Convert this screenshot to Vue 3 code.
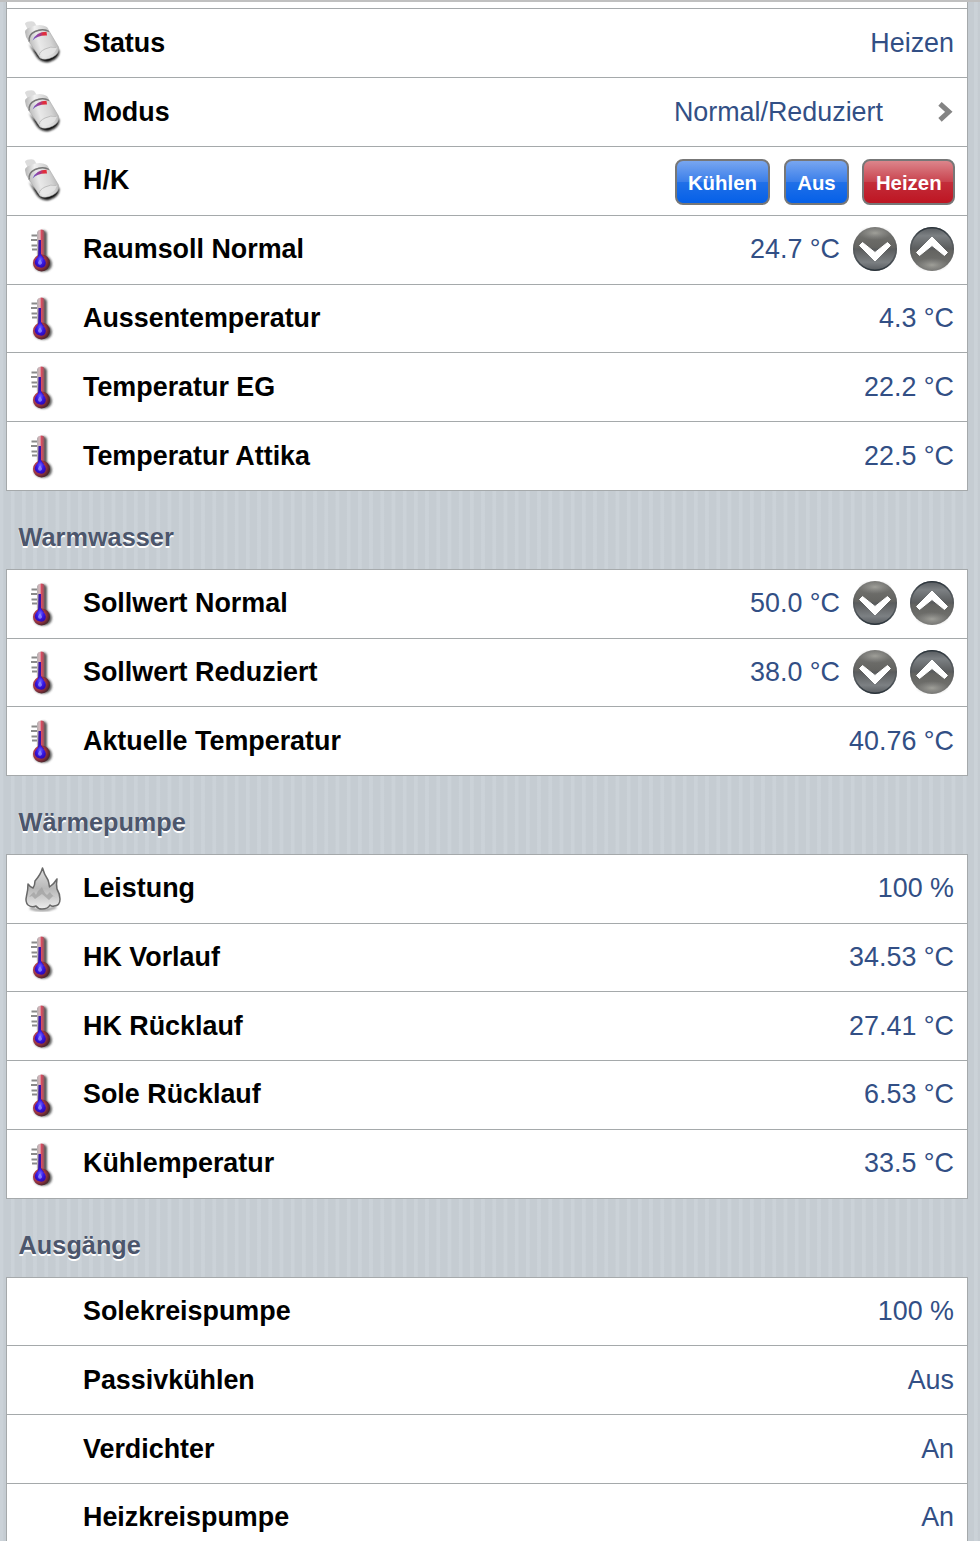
<script setup>
const groups = [
  {
    title: '',
    rows: [
      { icon: 'bottle', label: 'Status', value: 'Heizen' },
      { icon: 'bottle', label: 'Modus', value: 'Normal/Reduziert', link: true },
      { icon: 'bottle', label: 'H/K', buttons: [['Kühlen', 'blue'], ['Aus', 'blue'], ['Heizen', 'red']] },
      { icon: 'thermo', label: 'Raumsoll Normal', value: '24.7 °C', stepper: true },
      { icon: 'thermo', label: 'Aussentemperatur', value: '4.3 °C' },
      { icon: 'thermo', label: 'Temperatur EG', value: '22.2 °C' },
      { icon: 'thermo', label: 'Temperatur Attika', value: '22.5 °C' },
    ],
  },
  {
    title: 'Warmwasser',
    rows: [
      { icon: 'thermo', label: 'Sollwert Normal', value: '50.0 °C', stepper: true },
      { icon: 'thermo', label: 'Sollwert Reduziert', value: '38.0 °C', stepper: true },
      { icon: 'thermo', label: 'Aktuelle Temperatur', value: '40.76 °C' },
    ],
  },
  {
    title: 'Wärmepumpe',
    rows: [
      { icon: 'flame', label: 'Leistung', value: '100 %' },
      { icon: 'thermo', label: 'HK Vorlauf', value: '34.53 °C' },
      { icon: 'thermo', label: 'HK Rücklauf', value: '27.41 °C' },
      { icon: 'thermo', label: 'Sole Rücklauf', value: '6.53 °C' },
      { icon: 'thermo', label: 'Kühlemperatur', value: '33.5 °C' },
    ],
  },
  {
    title: 'Ausgänge',
    rows: [
      { label: 'Solekreispumpe', value: '100 %' },
      { label: 'Passivkühlen', value: 'Aus' },
      { label: 'Verdichter', value: 'An' },
      { label: 'Heizkreispumpe', value: 'An' },
    ],
  },
]
</script>

<template>
  <main class="screen">
    <svg class="defs" width="0" height="0" aria-hidden="true">
      <defs>
        <linearGradient id="bottleBody" x1="0" y1=".4" x2="1" y2=".1">
          <stop offset="0" stop-color="#bcbcbc" /><stop offset=".3" stop-color="#e9e9e9" />
          <stop offset=".65" stop-color="#d6d6d6" /><stop offset="1" stop-color="#a5a5a5" />
        </linearGradient>
        <linearGradient id="bottleCap" x1="0" y1="0" x2="1" y2="0">
          <stop offset="0" stop-color="#b5b5b5" /><stop offset=".4" stop-color="#f1f1f1" /><stop offset="1" stop-color="#c8c8c8" />
        </linearGradient>
        <linearGradient id="bottleMark" x1="0" y1="0" x2="1" y2="0">
          <stop offset="0" stop-color="#6a5fd0" /><stop offset=".5" stop-color="#a03a90" /><stop offset=".75" stop-color="#e02d3c" />
        </linearGradient>
        <linearGradient id="tube" x1="0" y1="0" x2="1" y2="0">
          <stop offset="0" stop-color="#b5b0b2" /><stop offset=".4" stop-color="#d9b4ba" />
          <stop offset=".6" stop-color="#d84c60" /><stop offset="1" stop-color="#8a5a62" />
        </linearGradient>
        <radialGradient id="bulb" cx=".35" cy=".4" r=".7">
          <stop offset="0" stop-color="#d8506a" /><stop offset=".6" stop-color="#96313f" /><stop offset="1" stop-color="#352226" />
        </radialGradient>
        <radialGradient id="drop" cx=".5" cy=".45" r=".6">
          <stop offset="0" stop-color="#6d68ff" /><stop offset=".5" stop-color="#3818e8" /><stop offset="1" stop-color="#2a08ae" />
        </radialGradient>
        <linearGradient id="flame" x1="0" y1="0" x2="0" y2="1">
          <stop offset="0" stop-color="#dedede" /><stop offset=".5" stop-color="#b8b8b8" />
          <stop offset=".72" stop-color="#cecece" /><stop offset="1" stop-color="#eee" />
        </linearGradient>
        <linearGradient id="discDown" x1="0" y1="0" x2="0" y2="1">
          <stop offset="0" stop-color="#777773" /><stop offset=".46" stop-color="#646461" />
          <stop offset=".5" stop-color="#5a5c5d" /><stop offset=".8" stop-color="#7c8083" /><stop offset="1" stop-color="#55595d" />
        </linearGradient>
        <radialGradient id="gloss"><stop offset="0" stop-color="#b4b4ac" stop-opacity=".7" /><stop offset="1" stop-color="#999" stop-opacity="0" /></radialGradient>
        <linearGradient id="rim" x1="0" y1="0" x2="0" y2="1">
          <stop offset="0" stop-color="#777" stop-opacity=".2" /><stop offset=".6" stop-color="#454b50" stop-opacity=".5" /><stop offset="1" stop-color="#2b343b" />
        </linearGradient>
        <filter id="soft" x="-30%" y="-30%" width="160%" height="160%"><feGaussianBlur stdDeviation="1.1" /></filter>
        <filter id="fine" x="-10%" y="-10%" width="120%" height="120%"><feGaussianBlur stdDeviation=".55" /></filter>
      </defs>
    </svg>

    <section v-for="(group, g) in groups" :key="g" class="group">
      <h2 v-if="group.title">{{ group.title }}</h2>
      <ul>
        <li v-for="row in group.rows" :key="row.label">
          <span class="icon">
            <svg v-if="row.icon === 'bottle'" width="48" height="48" viewBox="0 0 48 48">
              <path d="M12 24L20 37Q24 43 32 42Q42 39 42.500 31L38 26L18 30Z" fill="#111" filter="url(#soft)" />
              <g filter="url(#fine)">
                <path d="M8 4Q8 2 12 1.500Q17 .5 18 3L20 7L11 10Z" fill="#dcdcdc" />
                <path d="M8 12Q8 9 13 7.500Q21 4 26 5.500Q31 6.500 31.500 9.500L32 14L13 24L9 17Z" fill="url(#bottleCap)" />
                <path d="M12 21.500Q11 15 18 11.500Q26 8 32 11L41.500 27Q43 33 36 37Q28 41 23 38Z" fill="url(#bottleBody)" stroke="#aaa" stroke-width=".6" />
                <path d="M12.300 21.500Q11 15 18 11.500Q26 8 32 11.500" fill="none" stroke="#777" stroke-width="1.400" />
                <path d="M15.500 20.500Q19 12 29.500 11.800L30 15.500Q21 15 15.500 20.500Z" fill="url(#bottleMark)" />
                <path d="M23 36Q21 32 28 29Q36 25 40 28Q37 36 26 37Z" fill="#e8e8e8" opacity=".7" />
                <path d="M22.500 35Q22 32 28 29Q34 26 39 27.500" fill="none" stroke="#bdbdbd" />
              </g>
            </svg>
            <svg v-else-if="row.icon === 'thermo'" width="48" height="48" viewBox="0 0 48 48">
              <path d="M23 5Q28 1 30 6V29Q37 34 34 41Q29 47 20 43Q13 37 21 30Z" fill="#333" opacity=".8" filter="url(#soft)" />
              <g filter="url(#fine)">
                <path d="M14.500 8.500H20M14 13H20M14.500 18.500H20M15 22.500H20" stroke="#8a8a8a" stroke-width="1.800" />
                <path d="M20 29V5Q21 2.500 24 2.500Q27.500 2.500 27.500 5V29Z" fill="url(#tube)" />
                <circle cx="24.500" cy="36" r="8.500" fill="url(#bulb)" />
                <path d="M21.500 13H24V27Q25 29 27 31L21 31Z" fill="#3818a8" />
                <path d="M23 26Q25 30 28 33Q30 37 27 40Q24 41.500 20 39.500Q16 36 19 32Q22 29 23 26Z" fill="url(#drop)" />
                <path d="M21 35.500Q23 31 24 34Q26 36 24 37.500Q21 38.500 21 35.500Z" fill="#a5a4ff" opacity=".65" />
              </g>
            </svg>
            <svg v-else-if="row.icon === 'flame'" width="48" height="48" viewBox="0 0 48 48">
              <path d="M13 42Q26 47 39 41" stroke="#999" stroke-width="2.500" fill="none" filter="url(#soft)" />
              <g filter="url(#fine)" stroke-linejoin="round">
                <path d="M25.500 2Q27 8 31 14Q32 17 32.500 21Q37 18 40 13Q39 19 40 23Q43 28 43 33Q43 40 37 40Q35 41 33 39Q31 43 25 43Q21 43 19 40Q15 42 11 39Q8 36 9.500 30Q11 24 11 18Q13 21 16 22Q18 19 18 15Q24 8 25.500 2Z" fill="url(#flame)" stroke="#686868" stroke-width="1.500" />
                <path d="M12 31Q14 28 17 26L19 29Q21 24 25 21Q27 27 30 29L33 26Q34 29 40 32L36 30L32 34L25 28L18 33L15 30Z" fill="#a2a2a2" opacity=".75" />
              </g>
            </svg>
          </span>
          <span class="label">{{ row.label }}</span>
          <span v-if="row.value" class="value">{{ row.value }}</span>
          <svg v-if="row.link" class="chevron" width="16" height="20" viewBox="0 0 16 20">
            <path d="M2 1.800L10.800 9.800L2 17.800" fill="none" stroke="#848484" stroke-width="5" />
          </svg>
          <span v-if="row.buttons" class="buttons">
            <button v-for="b in row.buttons" :key="b[0]" :class="b[1]">{{ b[0] }}</button>
          </span>
          <span v-if="row.stepper" class="stepper">
            <svg v-for="dir in ['down', 'up']" :key="dir" :class="dir" width="44" height="44" viewBox="0 0 44 44">
              <circle cx="22" cy="22" r="22" fill="url(#discDown)" />
              <ellipse cx="22" cy="6" rx="17" ry="7" fill="url(#gloss)" />
              <circle cx="22" cy="22" r="21.200" fill="none" stroke="url(#rim)" stroke-width="1.600" />
              <path d="M6.500 18.500L9.500 15.500L22 25.500L34.500 15.500L37.500 18.500L22 34Z" fill="#fff" stroke="#fff" stroke-width="1" stroke-linejoin="round" />
            </svg>
          </span>
        </li>
      </ul>
    </section>
  </main>
</template>

<style>
body { margin: 0; overflow: hidden; }
</style>

<style scoped>
.screen {
  box-sizing: border-box;
  height: 1541px;
  overflow: hidden;
  padding: 0 12px 0 6px;
  border-top: 2px solid #c0c0c0;
  background: repeating-linear-gradient(90deg, #cbd2d8 0, #cbd2d8 2.8px, #c5ccd2 3.8px, #c5ccd2 10.4px, #cbd2d8 11.2px);
  font-family: "Liberation Sans", Arial, sans-serif;
}
.defs { position: absolute; }
ul {
  margin: 0;
  padding: 0;
  list-style: none;
  background: #fff;
  border: solid #a5a9ab;
  border-width: 0 1px;
}
.group:first-of-type ul { padding-top: 6.45px; }
.group ul { box-shadow: 0 1px #a5a9ab; }
li {
  box-sizing: border-box;
  height: 68.8px;
  border-top: 1px solid #a5a9ab;
  display: flex;
  align-items: center;
  padding: 0 13px 1.2px 0;
}
h2 {
  box-sizing: border-box;
  height: 78.7px;
  margin: 0;
  padding: 32px 0 0 12.6px;
  font-size: 25.3px;
  line-height: 30px;
  color: #4c566c;
  text-shadow: 0 1.6px 0 #fff;
}
.group:last-of-type h2 { height: 78.85px; }
.icon { width: 76px; height: 48px; padding-left: 10px; margin-top: 3px; box-sizing: border-box; flex: none; }
.icon svg { display: block; }
.label { flex: 1; font-size: 26.88px; font-weight: bold; color: #000; line-height: 32px; }
.value { font-size: 26.88px; color: #324f85; line-height: 32px; }
.chevron { margin: 1px 0 0 55px; }
.buttons { display: flex; gap: 13.4px; margin: 4px -1px 0 0; }
button {
  box-sizing: border-box;
  height: 46px;
  padding: 2px 11.4px 0;
  border: 2px solid #777;
  border-radius: 8px;
  font: bold 20.4px/40px "Liberation Sans", Arial, sans-serif;
  color: #fff;
}
.blue { background: linear-gradient(#78a6f0, #3b7fea 49%, #2070e8 51%, #0560e8); }
.red { background: linear-gradient(#dc858b, #c9444f 49%, #c32d3a 51%, #be1522); }
.stepper { display: flex; gap: 13px; margin-left: 13px; }
.up { transform: rotate(180deg); }
</style>
